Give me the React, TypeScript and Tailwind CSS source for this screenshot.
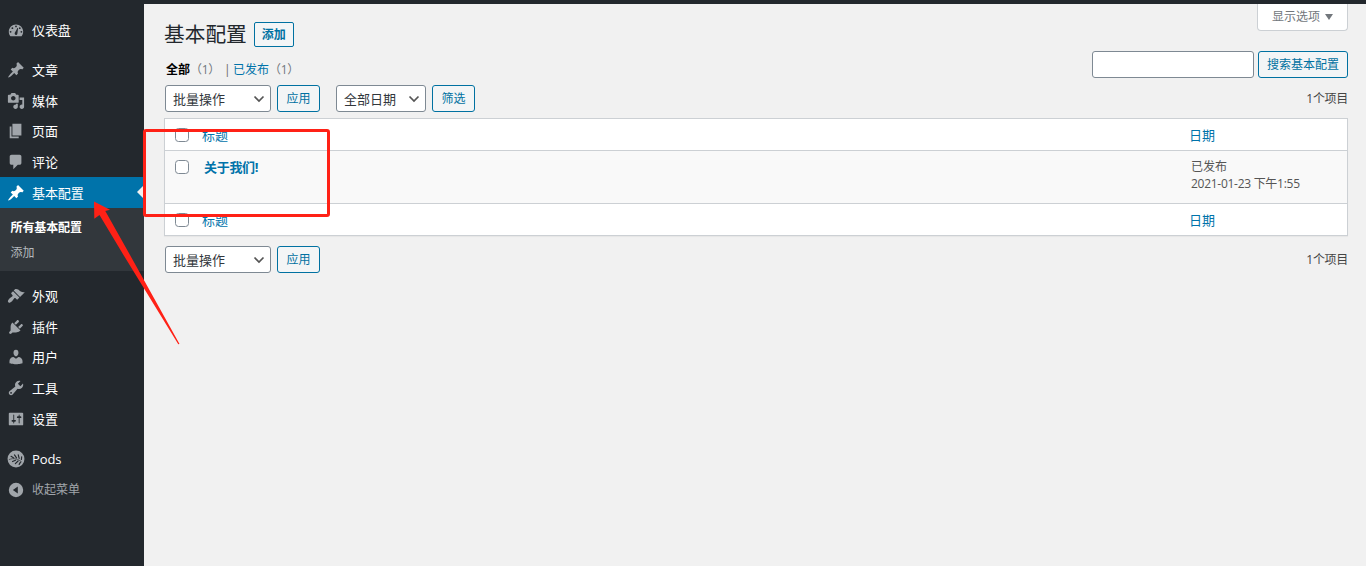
import React from "react";

const paths = {
  dashboard:
    "M3.76 17h12.48A7.94 7.94 0 0018 12c0-4.41-3.58-8-8-8s-8 3.59-8 8c0 1.9.66 3.63 1.76 5zM9 6a1 1 0 012 0 1 1 0 01-2 0zM5 8a1 1 0 012 0 1 1 0 01-2 0zM8.5 14c0-.83 1.2-2.3 3.1-6.1.2-.3.8-.1.7.3-.6 4.1-.6 5-.8 5.9A1.5 1.5 0 018.5 14zM13.2 8a1 1 0 012 0 1 1 0 01-2 0zM3 12a1 1 0 012 0 1 1 0 01-2 0zM15 12a1 1 0 012 0 1 1 0 01-2 0z",
  post: "M10.44 3.02l1.82-1.82 6.36 6.35-1.83 1.82c-1.05-.68-2.48-.57-3.41.36l-.75.75c-.92.93-1.04 2.35-.35 3.41l-1.83 1.82-2.41-2.41-2.8 2.79c-.42.42-3.38 2.71-3.8 2.29s1.86-3.39 2.28-3.81l2.79-2.79L4.1 9.36l1.83-1.82c1.05.69 2.48.57 3.4-.36l.75-.75c.93-.92 1.05-2.35.36-3.41z",
  media:
    "M13 11V4c0-.55-.45-1-1-1h-1.67L9 1H5L3.67 3H2c-.55 0-1 .45-1 1v7c0 .55.45 1 1 1h10c.55 0 1-.45 1-1zM7 4.5c1.38 0 2.5 1.12 2.5 2.5S8.38 9.5 7 9.5 4.5 8.38 4.5 7 5.62 4.5 7 4.5zM14 6h5v10.5c0 1.38-1.12 2.5-2.5 2.5S14 17.88 14 16.5s1.12-2.5 2.5-2.5c.17 0 .34.02.5.05V9h-3V6zm-4 8.05V13h2v3.5c0 1.38-1.12 2.5-2.5 2.5S7 17.88 7 16.5 8.12 14 9.5 14c.17 0 .34.02.5.05z",
  page: "M6 15V2h10v13H6zm-1 1h8v2H3V5h2v11z",
  comments:
    "M5 2h9c1.1 0 2 .9 2 2v7c0 1.1-.9 2-2 2h-2l-5 5v-5H5c-1.1 0-2-.9-2-2V4c0-1.1.9-2 2-2z",
  appearance:
    "M14.48 11.06L7.41 3.99l1.5-1.5c.5-.56 2.3-.47 3.51.32 1.21.8 1.43 1.28 2.91 2.1 1.18.64 2.45 1.26 4.45.85zm-.71.71L6.7 4.7 4.93 6.47c-.39.39-.39 1.02 0 1.41l1.06 1.06c.39.39.39 1.03 0 1.42-.6.6-1.43 1.11-2.21 1.69-.35.26-.7.53-1.01.84C1.43 14.23.4 16.08 1.4 17.07c.99 1 2.84-.03 4.18-1.36.31-.31.58-.66.85-1.02.57-.78 1.08-1.61 1.69-2.21.39-.39 1.02-.39 1.41 0l1.06 1.06c.39.39 1.02.39 1.41 0z",
  plugins:
    "M13.11 4.36L9.87 7.6 8 5.73l3.24-3.24c.35-.34 1.05-.2 1.56.32.52.51.66 1.21.31 1.55zm-8 1.77l.91-1.12 9.01 9.01-1.19.84c-.71.71-2.63 1.16-3.82 1.16H6.14L4.9 17.26c-.59.59-1.54.59-2.12 0-.59-.58-.59-1.53 0-2.12l1.24-1.24v-3.88c0-1.13.4-3.19 1.09-3.89zm7.26 3.97l3.24-3.24c.34-.35 1.04-.21 1.55.31.52.51.66 1.21.31 1.55l-3.24 3.25z",
  users:
    "M10 9.25c-2.27 0-2.73-3.44-2.73-3.44C7 4.02 7.82 2 9.97 2c2.16 0 2.98 2.02 2.71 3.81 0 0-.41 3.44-2.68 3.44zm0 2.57L12.72 10c2.39 0 4.52 2.33 4.52 4.53v2.49s-3.65 1.13-7.24 1.13c-3.65 0-7.24-1.13-7.24-1.13v-2.49c0-2.25 1.94-4.48 4.47-4.48z",
  tools:
    "M16.68 9.77c-1.34 1.34-3.3 1.67-4.95.99l-5.41 6.52c-.99.99-2.59.99-3.58 0s-.99-2.59 0-3.57l6.52-5.42c-.68-1.65-.35-3.61.99-4.95 1.28-1.28 3.12-1.62 4.72-1.06l-2.89 2.89 2.82 2.82 2.86-2.87c.53 1.58.18 3.39-1.08 4.65zM3.81 16.21c.4.39 1.04.39 1.43 0 .4-.4.4-1.04 0-1.43-.39-.4-1.03-.4-1.43 0-.39.39-.39 1.03 0 1.43z",
  settings:
    "M18 16V4c0-.55-.45-1-1-1H3c-.55 0-1 .45-1 1v12c0 .55.45 1 1 1h14c.55 0 1-.45 1-1zM8 11h1c.55 0 1 .45 1 1s-.45 1-1 1H8v1.5c0 .28-.22.5-.5.5s-.5-.22-.5-.5V13H6c-.55 0-1-.45-1-1s.45-1 1-1h1V5.5c0-.28.22-.5.5-.5s.5.22.5.5V11zm5-2h-1c-.55 0-1-.45-1-1s.45-1 1-1h1V5.5c0-.28.22-.5.5-.5s.5.22.5.5V7h1c.55 0 1 .45 1 1s-.45 1-1 1h-1v5.5c0 .28-.22.5-.5.5s-.5-.22-.5-.5V9z",
  collapse: "M10 2a8 8 0 100 16 8 8 0 000-16zM12 6v8l-5.5-4z",
};

type IconName = keyof typeof paths | "pods";

function Icon({ name }: { name: IconName }) {
  if (name === "pods") {
    return (
      <svg viewBox="0 0 20 20" className="size-[18px] shrink-0">
        <circle cx="10" cy="10" r="9.4" fill="currentColor" />
        <g fill="none" stroke="#23282d" strokeLinecap="round">
          <path d="M2.500 10.500c5-2 10-.5 13.500 2.500" strokeWidth="0.7" />
          <path d="M4.500 7l3 1.800M8.300 5.500l2.300 3.300M12.500 5.300l1 4M16.300 7.500l-.3 3M6.200 12.800l3.200-1.500M9.300 15.200l3-3M13.500 16l1.500-2.500" strokeWidth="1.300" />
        </g>
      </svg>
    );
  }
  return (
    <svg viewBox="0 0 20 20" fill="currentColor" fillRule="evenodd" className="size-[18px] shrink-0">
      <path d={paths[name]} />
    </svg>
  );
}

function MenuItem({ icon, label, active, muted }: { icon: IconName; label: string; active?: boolean; muted?: boolean }) {
  return (
    <a
      className={
        "relative flex h-[30.7px] items-center gap-[7px] pl-[7px] text-[13px] leading-[18px] " +
        (active ? "bg-[#0073aa] text-white" : muted ? "text-[#a0a5aa]" : "text-white")
      }
    >
      <span className={active ? "text-white" : "text-[#a0a5aa]"}>
        <Icon name={icon} />
      </span>
      <span className={muted ? "text-[12px]" : "tracking-[-0.1px]"}>{label}</span>
      {active && (
        <span className="absolute top-[8px] right-0 border-y-[7px] border-r-[7px] border-y-transparent border-r-[#f1f1f1]" />
      )}
    </a>
  );
}

function Button({ children, className = "" }: { children: React.ReactNode; className?: string }) {
  return (
    <button
      className={
        "flex h-[27px] items-center justify-center rounded-[3px] border border-[#0071a1] bg-[#f3f5f6] text-[12px] text-[#0071a1] " +
        className
      }
    >
      {children}
    </button>
  );
}

function Select({ label, className }: { label: string; className: string }) {
  return (
    <div
      className={
        "flex h-[27px] items-center justify-between rounded-[3px] border border-[#7e8993] bg-white pr-[5px] pl-[7px] text-[13px] text-[#32373c] " +
        className
      }
    >
      <span>{label}</span>
      <svg viewBox="0 0 12 8" className="h-[8px] w-[12px]" fill="none" stroke="#555" strokeWidth="1.7">
        <path d="M1.5 1.5L6 6l4.500-4.500" />
      </svg>
    </div>
  );
}

function Checkbox() {
  return <span className="block size-[14px] shrink-0 rounded-[3.500px] border border-[#7e8993] bg-white" />;
}

function HeadRow({ className = "" }: { className?: string }) {
  return (
    <div className={"flex items-center bg-white text-[13px] text-[#0073aa] " + className}>
      <div className="w-[37px] pl-[10px]">
        <Checkbox />
      </div>
      <div className="flex-1 pt-px">标题</div>
      <div className="w-[158px] pt-px">日期</div>
    </div>
  );
}

export default function App() {
  return (
    <div className="relative flex h-[566px] w-[1366px] flex-col overflow-hidden bg-[#f1f1f1] font-['Open_Sans','Noto_Sans_CJK_SC',sans-serif] text-[12px] leading-[18px] text-[#444]">
      <div className="h-[4px] shrink-0 bg-[#23282d]" />
      <div className="flex min-h-0 flex-1">
        <nav className="w-[144px] shrink-0 bg-[#23282d] pt-[10.500px]">
          <MenuItem icon="dashboard" label="仪表盘" />
          <div className="h-[9.300px]" />
          <MenuItem icon="post" label="文章" />
          <MenuItem icon="media" label="媒体" />
          <MenuItem icon="page" label="页面" />
          <MenuItem icon="comments" label="评论" />
          <MenuItem icon="post" label="基本配置" active />
          <div className="flex h-[62.700px] flex-col gap-[7px] bg-[#32373c] pt-[11px] pl-[10.500px] text-[12px]">
            <span className="font-bold tracking-[-0.1px] text-white">所有基本配置</span>
            <span className="text-[#b4b9be]">添加</span>
          </div>
          <div className="h-[10px]" />
          <MenuItem icon="appearance" label="外观" />
          <MenuItem icon="plugins" label="插件" />
          <MenuItem icon="users" label="用户" />
          <MenuItem icon="tools" label="工具" />
          <MenuItem icon="settings" label="设置" />
          <div className="h-[9.800px]" />
          <MenuItem icon="pods" label="Pods" />
          <MenuItem icon="collapse" label="收起菜单" muted />
        </nav>

        <main className="flex min-w-0 flex-1 flex-col pr-[18px] pl-[20px]">
          <div className="flex h-[47px] items-start justify-between">
            <div className="flex items-center gap-[7px] pt-[18px]">
              <h1 className="text-[20.700px] leading-[25px] text-[#23282d]">基本配置</h1>
              <button className="flex h-[25px] w-[40px] items-center justify-center rounded-[2px] border border-[#0071a1] bg-[#f3f5f6] pt-px font-semibold text-[#0071a1]">
                添加
              </button>
            </div>
            <div className="flex h-[27px] w-[91px] items-center justify-center gap-[5px] rounded-b-[4px] border border-t-0 border-[#ccd0d4] bg-white text-[#72777c]">
              显示选项
              <svg viewBox="0 0 8 6" className="h-[6px] w-[8px]" fill="currentColor">
                <path d="M0 0h8L4 6z" />
              </svg>
            </div>
          </div>

          <div className="flex h-[34px] justify-between">
            <div className="flex pt-[10px] pl-[2px]">
              <span className="font-bold text-black">全部</span>
              <span className="w-[34px] tracking-[-0.300px] text-[#72777c]">（1）</span>
              <span className="w-[9px] text-[#666]">|</span>
              <span className="text-[#0073aa]">已发布</span>
              <span className="tracking-[-0.300px] text-[#72777c]">（1）</span>
            </div>
            <div className="flex gap-[4px]">
              <input className="h-[27px] w-[162px] rounded-[3px] border border-[#7e8993] bg-white" />
              <Button className="w-[90px]">搜索基本配置</Button>
            </div>
          </div>

          <div className="flex h-[33px] items-start justify-between pl-px">
            <div className="flex">
              <Select label="批量操作" className="w-[106px]" />
              <Button className="ml-[6px] w-[43px]">应用</Button>
              <Select label="全部日期" className="ml-[16px] w-[90px]" />
              <Button className="ml-[6px] w-[43px]">筛选</Button>
            </div>
            <span className="pt-[5px] tracking-[-0.300px]">1个项目</span>
          </div>

          <div className="h-[118px] border border-[#ccd0d4] shadow-[0_1px_1px_rgba(0,0,0,0.04)]">
            <HeadRow className="h-[32px] border-b border-[#ccd0d4]" />
            <div className="flex h-[53px] border-b border-[#ccd0d4] bg-[#f9f9f9]">
              <div className="w-[39px] pt-[9px] pl-[10px]">
                <Checkbox />
              </div>
              <div className="flex-1 pt-[7px] text-[13px] font-bold tracking-[-0.300px] text-[#0073aa]">关于我们!</div>
              <div className="w-[156px] pt-[7px] leading-[17px] text-[#555]">
                <div>已发布</div>
                <div className="tracking-[-0.280px]">2021-01-23 下午1:55</div>
              </div>
            </div>
            <HeadRow className="h-[31px]" />
          </div>

          <div className="flex items-start justify-between pt-[10px] pl-px">
            <div className="flex">
              <Select label="批量操作" className="w-[106px]" />
              <Button className="ml-[6px] w-[43px]">应用</Button>
            </div>
            <span className="pt-[5px] tracking-[-0.300px]">1个项目</span>
          </div>
        </main>
      </div>

      {/* Tutorial callouts drawn above the page */}
      <div className="absolute top-[129px] left-[143px] h-[88px] w-[187px] rounded-[3px] border-3 border-[#ff2116]" />
      <svg viewBox="0 0 90 150" className="absolute top-[198px] left-[92px] h-[150px] w-[90px]">
        <path d="M2 3.500L18 11.700l-4.700 1.300L38 57l49.500 89-1.200.3L31.500 57 7.500 17 2.300 20.800z" fill="#ff2116" />
      </svg>
    </div>
  );
}
